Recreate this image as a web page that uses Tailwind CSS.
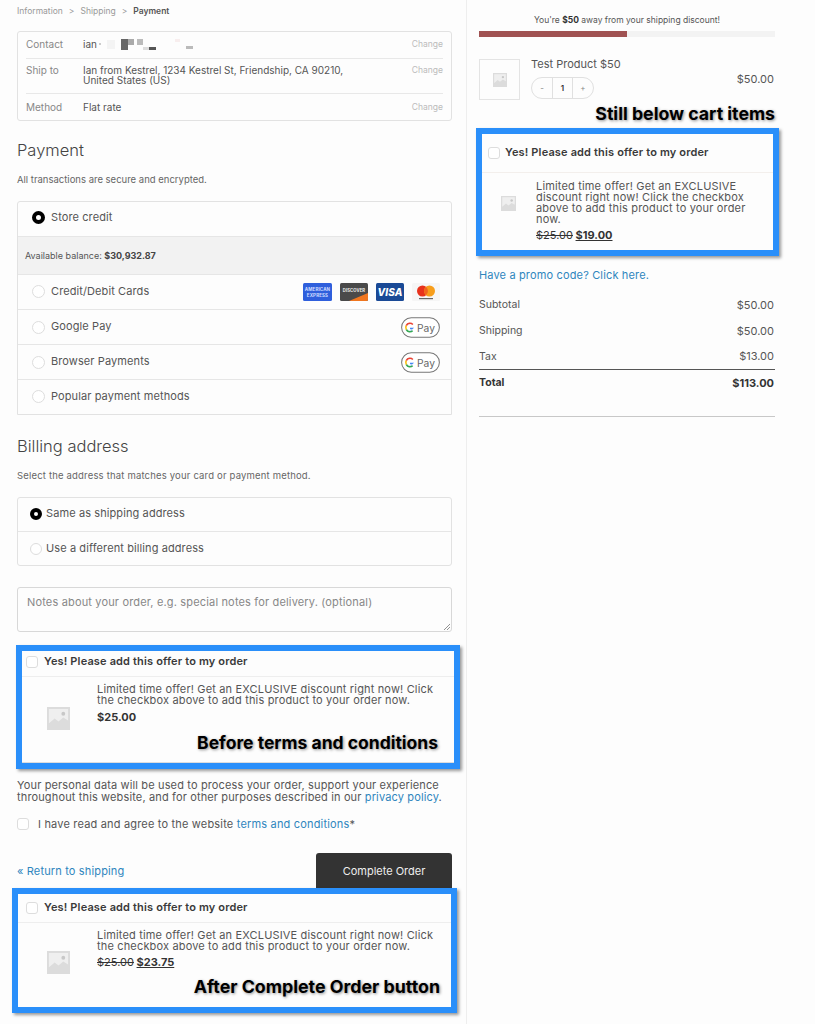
<!DOCTYPE html>
<html lang="en">
  <head>
    <meta charset="UTF-8" />
    <meta name="viewport" content="width=device-width, initial-scale=1.0" />
    <title>Checkout payment</title>
    <script src="https://cdn.jsdelivr.net/npm/@tailwindcss/browser@4"></script>
  </head>
  <body class="bg-[#fdfdfd] font-[Inter,sans-serif] text-[#555]">
    <svg class="hidden">
      <symbol id="ph" viewBox="0 0 24 24">
        <rect width="24" height="24" fill="#dcdcdc" />
        <path d="M2 2h20v12l-5-3-5 4-4-3-6 5z" fill="#efefef" />
        <circle cx="17" cy="7" r="2" fill="#c8c8c8" />
      </symbol>
      <symbol id="gpay" viewBox="0 0 38 20">
        <rect x=".6" y=".6" width="36.8" height="18.8" rx="9.4" fill="#fff" stroke="#777" />
        <path d="M12.8 10.2h-4v1.5h2.3a2.4 2.4 0 0 1-2.3 1.6z" fill="#4285f4" />
        <path d="M8.8 13.3a3.3 3.3 0 0 1-3-1.9l-1.3 1a4.8 4.8 0 0 0 7.4 1.200l-1-1a3 3 0 0 1-2.100.7z" fill="#34a853" />
        <path d="M5.800 11.400a3.300 3.300 0 0 1 0-2.800l-1.300-1a4.800 4.800 0 0 0 0 4.800z" fill="#fbbc05" />
        <path d="M8.800 6.700c.9 0 1.600.3 2.200.9l1.100-1.100a4.800 4.800 0 0 0-7.600 1.100l1.300 1a3.300 3.300 0 0 1 3-1.900z" fill="#ea4335" />
        <text x="15.500" y="14" font-size="10" fill="#666" font-family="Inter">Pay</text>
      </symbol>
    </svg>

    <div class="flex h-[1024px] w-[815px] overflow-hidden">
      <!-- left column -->
      <div class="h-full w-[467px] shrink-0 border-r border-[#eeeeee] pl-[17px] pr-[14px]">
        <div class="flex h-[22px] items-center gap-[6px] text-[8.500px] text-[#999]">
          <span>Information</span>
          <span>&gt;</span>
          <span>Shipping</span>
          <span>&gt;</span>
          <span class="font-semibold text-[#555]">Payment</span>
        </div>

        <!-- summary -->
        <div class="mt-[9px] h-[90px] rounded-[3px] border border-[#e2e2e2] px-[8px] text-[10px] leading-[10px]">
          <div class="flex h-[27px] items-center border-b border-[#e8e8e8] pb-[2px]">
            <span class="w-[57px] text-[#888]">Contact</span>
            <span>ian</span>
            <div class="ml-[2px] flex h-[10px] items-center">
              <i class="mr-[6px] h-[2px] w-[2px] bg-[#ccc]"></i>
              <i class="h-[9px] w-[8px] bg-[#f4f4f4]"></i>
              <i class="ml-[6px] h-[11px] w-[7px] bg-[#666]"></i>
              <i class="h-[6px] w-[6px] -translate-y-[2px] bg-[#aaa]"></i>
              <i class="ml-[3px] h-[6px] w-[6px] -translate-y-[2px] bg-[#bbb]"></i>
              <i class="h-[3px] w-[6px] translate-y-[4px] bg-[#ddd]"></i>
              <i class="h-[3px] w-[7px] translate-y-[4px] bg-[#555]"></i>
              <i class="ml-[19px] h-[3px] w-[5px] -translate-y-[4px] bg-[#f8eeee]"></i>
              <i class="ml-[6px] h-[3px] w-[7px] translate-y-[3px] bg-[#bbb]"></i>
            </div>
            <span class="ml-auto text-[8.500px] text-[#bbb]">Change</span>
          </div>
          <div class="flex h-[35px] items-start border-b border-[#e8e8e8] pt-[6px]">
            <span class="w-[57px] text-[#888]">Ship to</span>
            <span class="w-[270px]">Ian from Kestrel, 1234 Kestrel St, Friendship, CA 90210, United States (US)</span>
            <span class="ml-auto text-[8.500px] text-[#bbb]">Change</span>
          </div>
          <div class="flex h-[26px] items-center">
            <span class="w-[57px] text-[#888]">Method</span>
            <span>Flat rate</span>
            <span class="ml-auto text-[8.500px] text-[#bbb]">Change</span>
          </div>
        </div>

        <!-- payment -->
        <h2 class="mt-[19px] text-[16.500px] leading-[20px] font-light text-[#444]">Payment</h2>
        <p class="mt-[15px] text-[9.500px] leading-[10px] text-[#666]">All transactions are secure and encrypted.</p>

        <div class="mt-[16px] h-[214px] rounded-t-[3px] border border-[#e2e2e2] text-[11px] tracking-[.1px]">
          <div class="flex h-[34px] items-center pb-[3px] pl-[14px]">
            <span class="mr-[6px] h-[13px] w-[13px] rounded-full border-[4px] border-black bg-white"></span>
            <span>Store credit</span>
          </div>
          <div class="flex h-[39px] items-center border-y border-[#e6e6e6] bg-[#f2f2f2] pl-[7px] text-[9px] tracking-normal">
            Available balance:&nbsp;<b class="font-bold text-[#444]">$30,932.87</b>
          </div>
          <div class="flex h-[35px] items-center border-b border-[#e6e6e6] pb-[1px] pl-[14px] pr-[11px]">
            <span class="mr-[6px] h-[13px] w-[13px] rounded-full border border-[#ddd] bg-white"></span>
            <span>Credit/Debit Cards</span>
            <div class="ml-auto flex items-center gap-[8px]">
              <svg width="29" height="18" viewBox="0 0 29 18">
                <rect width="29" height="18" rx="1.500" fill="#2f5fdc" />
                <text x="14.500" y="8" text-anchor="middle" font-size="4.500" font-weight="700" fill="#cfdcff" font-family="Inter">AMERICAN</text>
                <text x="14.500" y="14" text-anchor="middle" font-size="4.500" font-weight="700" fill="#cfdcff" font-family="Inter">EXPRESS</text>
              </svg>
              <svg width="28" height="18" viewBox="0 0 28 18">
                <rect width="28" height="18" rx="1.500" fill="#4a4a4a" />
                <path d="M9 18 28 10v6.500a1.500 1.500 0 0 1-1.500 1.500z" fill="#f0761f" />
                <text x="14" y="9" text-anchor="middle" font-size="4.200" font-weight="700" fill="#eee" font-family="Inter">DISCOVER</text>
              </svg>
              <svg width="28" height="18" viewBox="0 0 28 18">
                <rect width="28" height="18" rx="1.500" fill="#1a4a96" />
                <text x="14" y="13" text-anchor="middle" font-size="10" font-weight="800" font-style="italic" fill="#fff" font-family="Inter">VISA</text>
              </svg>
              <svg width="28" height="18" viewBox="0 0 28 18">
                <rect width="28" height="18" rx="1.500" fill="#f6f6f6" />
                <circle cx="10.500" cy="8" r="5.500" fill="#e8321c" />
                <circle cx="17.500" cy="8" r="5.500" fill="#f79e1b" />
                <path d="M14 3.800a5.500 5.500 0 0 1 0 8.400 5.500 5.500 0 0 1 0-8.400z" fill="#f1641e" />
                <rect x="7" y="15" width="14" height="1.200" fill="#666" />
              </svg>
            </div>
          </div>
          <div class="flex h-[35px] items-center border-b border-[#e6e6e6] pl-[14px] pr-[11px]">
            <span class="mr-[6px] h-[13px] w-[13px] rounded-full border border-[#ddd] bg-white"></span>
            <span class="-translate-y-[1px]">Google Pay</span>
            <svg class="ml-auto" width="39" height="21"><use href="#gpay" /></svg>
          </div>
          <div class="flex h-[35px] items-center border-b border-[#e6e6e6] pl-[14px] pr-[11px]">
            <span class="mr-[6px] h-[13px] w-[13px] rounded-full border border-[#ddd] bg-white"></span>
            <span class="-translate-y-[1px]">Browser Payments</span>
            <svg class="ml-auto" width="39" height="21"><use href="#gpay" /></svg>
          </div>
          <div class="flex h-[34px] items-center pb-[2px] pl-[14px]">
            <span class="mr-[6px] h-[13px] w-[13px] rounded-full border border-[#ddd] bg-white"></span>
            <span>Popular payment methods</span>
          </div>
        </div>

        <!-- billing -->
        <h2 class="mt-[21px] text-[16.500px] leading-[20px] font-light text-[#444]">Billing address</h2>
        <p class="mt-[15px] text-[9.500px] leading-[10px] tracking-[.18px] text-[#666]">Select the address that matches your card or payment method.</p>

        <div class="mt-[16px] h-[69px] rounded-[3px] border border-[#e2e2e2] text-[11px] tracking-[.1px]">
          <div class="flex h-[34px] items-center border-b border-[#e6e6e6] pb-[2px] pl-[12px]">
            <span class="mr-[4px] h-[12px] w-[12px] rounded-full border-[4px] border-black bg-white"></span>
            <span>Same as shipping address</span>
          </div>
          <div class="flex h-[33px] items-center pl-[12px]">
            <span class="mr-[4px] h-[12px] w-[12px] rounded-full border border-[#ddd] bg-white"></span>
            <span>Use a different billing address</span>
          </div>
        </div>

        <div class="relative mt-[21px] h-[45px] rounded-[3px] border border-[#d8d8d8] px-[9px] pt-[8px] text-[11px] leading-[12px] tracking-[.16px] text-[#888]">
          Notes about your order, e.g. special notes for delivery. (optional)
          <svg class="absolute bottom-[1px] right-[1px]" width="7" height="7" viewBox="0 0 7 7"><path d="M1 7 7 1M4 7l3-3" stroke="#777" stroke-width=".8" /></svg>
        </div>

        <!-- offer before terms -->
        <div class="mt-[13px] -ml-[1px] h-[124px] w-[444px] border-[6px] border-[#2a8ffa] bg-[#fdfdfd] shadow-[2px_2px_3px_rgba(0,0,0,.4)]">
          <div class="flex h-[26px] items-center border-b border-[#eeeeee] pl-[4px] pb-[4px]">
            <span class="mr-[6px] h-[12px] w-[12px] rounded-[3px] border border-[#ddd] bg-white"></span>
            <span class="text-[11px] font-semibold tracking-[.15px] text-[#3a3a3a]">Yes! Please add this offer to my order</span>
          </div>
          <div class="flex h-[86px] border-b border-[#dddddd] pt-[7px]">
            <svg class="ml-[25px] mt-[23px] h-[23px] w-[23px] shrink-0"><use href="#ph" /></svg>
            <div class="ml-[27px] w-[341px]">
              <p class="text-[11px] leading-[11px] tracking-[.16px] text-[#555]">Limited time offer! Get an EXCLUSIVE discount right now! Click the checkbox above to add this product to your order now.</p>
              <p class="mt-[5px] text-[11px] leading-[12px] font-bold text-[#333]">$25.00</p>
              <p class="mt-[10px] text-right text-[17.500px] leading-[20px] font-bold text-black [text-shadow:1px_1px_3px_rgba(0,0,0,.45)]">Before terms and conditions</p>
            </div>
          </div>
        </div>

        <p class="mt-[10px] text-[11px] leading-[12px] tracking-[.14px] text-[#555]">Your personal data will be used to process your order, support your experience throughout this website, and for other purposes described in our <a class="text-[#2f86bd]">privacy policy</a>.</p>

        <div class="mt-[15px] flex h-[12px] items-center text-[11px] tracking-[.18px]">
          <span class="mr-[9px] h-[12px] w-[12px] rounded-[3px] border border-[#ddd] bg-white"></span>
          <span>I have read and agree to the website <a class="text-[#2f86bd]">terms and conditions</a>*</span>
        </div>

        <div class="mt-[23px] flex h-[35px] items-center justify-between text-[11px]">
          <a class="pt-[2px] tracking-[.15px] text-[#2f86bd]">« Return to shipping</a>
          <span class="flex h-[35px] w-[136px] items-center justify-center rounded-t-[3px] bg-[#333333] pt-[2px] text-[#eeeeee]">Complete Order</span>
        </div>

        <!-- offer after button -->
        <div class="relative -ml-[5px] h-[125px] w-[445px] border-[6px] border-[#2a8ffa] bg-[#fdfdfd] shadow-[2px_2px_3px_rgba(0,0,0,.4)]">
          <div class="flex h-[29px] items-center border-b border-[#eeeeee] pl-[8px] pb-[1px]">
            <span class="mr-[6px] h-[12px] w-[12px] rounded-[3px] border border-[#ddd] bg-white"></span>
            <span class="text-[11px] font-semibold tracking-[.15px] text-[#3a3a3a]">Yes! Please add this offer to my order</span>
          </div>
          <div class="flex pt-[7px]">
            <svg class="ml-[29px] mt-[21px] h-[23px] w-[23px] shrink-0"><use href="#ph" /></svg>
            <div class="ml-[27px] w-[343px]">
              <p class="text-[11px] leading-[11px] tracking-[.16px] text-[#555]">Limited time offer! Get an EXCLUSIVE discount right now! Click the checkbox above to add this product to your order now.</p>
              <p class="mt-[4px] text-[11px] leading-[12px] font-bold text-[#333]"><s class="font-normal">$25.00</s> <span class="underline">$23.75</span></p>
              <p class="mt-[9px] text-right text-[17.800px] leading-[20px] font-bold text-black [text-shadow:1px_1px_3px_rgba(0,0,0,.45)]">After Complete Order button</p>
            </div>
          </div>
        </div>
      </div>

      <!-- right column -->
      <div class="w-[348px] pl-[12px]">
        <div class="w-[296px]">
          <p class="mt-[15px] text-center text-[8.500px] leading-[10px] text-[#555]">You're <b class="text-[#333]">$50</b> away from your shipping discount!</p>
          <div class="mt-[6px] h-[6px] bg-[#f3f3f3]">
            <div class="h-full bg-[#a05252]" style="width: 50%"></div>
          </div>

          <div class="mt-[22px] flex h-[41px] items-start">
            <div class="flex h-[41px] w-[41px] items-center justify-center border border-[#e4e4e4]">
              <svg class="h-[14px] w-[14px]"><use href="#ph" /></svg>
            </div>
            <div class="ml-[11px]">
              <p class="text-[11px] leading-[11px]">Test Product $50</p>
              <div class="mt-[7px] flex h-[22px] w-[63px] items-center rounded-full border border-[#e0e0e0] text-[8px]">
                <span class="w-[20px] text-center text-[#888]">-</span>
                <span class="w-[21px] border-x border-[#e0e0e0] text-center leading-[20px] font-semibold text-[#333]">1</span>
                <span class="w-[20px] text-center text-[#888]">+</span>
              </div>
            </div>
            <span class="ml-auto mr-[1px] mt-[14px] text-[11px] leading-[12px]">$50.00</span>
          </div>

          <p class="mt-[4px] text-right text-[17.700px] leading-[20px] font-bold text-black [text-shadow:1px_1px_3px_rgba(0,0,0,.45)]">Still below cart items</p>
        </div>

        <!-- offer below cart -->
        <div class="mt-[4px] -ml-[3px] h-[128px] w-[303px] border-[6px] border-[#2a8ffa] bg-[#fdfdfd] shadow-[2px_2px_3px_rgba(0,0,0,.4)]">
          <div class="flex h-[39px] items-center border-b border-[#f3efec] pl-[6px] pb-[1px]">
            <span class="mr-[5px] h-[12px] w-[12px] rounded-[3px] border border-[#ddd] bg-white"></span>
            <span class="text-[11px] font-semibold tracking-[.15px] text-[#3a3a3a]">Yes! Please add this offer to my order</span>
          </div>
          <div class="flex pt-[8px]">
            <svg class="ml-[19px] mt-[15px] h-[15px] w-[15px] shrink-0"><use href="#ph" /></svg>
            <div class="ml-[20px] w-[225px]">
              <p class="text-[11px] leading-[11px] tracking-[.16px] text-[#555]">Limited time offer! Get an EXCLUSIVE discount right now! Click the checkbox above to add this product to your order now.</p>
              <p class="mt-[4px] text-[11px] leading-[12px] font-bold text-[#333]"><s class="font-normal">$25.00</s> <span class="underline">$19.00</span></p>
            </div>
          </div>
        </div>

        <div class="w-[296px] text-[10.500px]">
          <a class="mt-[13px] block text-[11px] leading-[12px] tracking-[.15px] text-[#2f86bd]">Have a promo code? Click here.</a>
          <div class="mt-[11px] flex h-[26px] items-center justify-between pr-[1px]"><span>Subtotal</span><span class="text-[11px]">$50.00</span></div>
          <div class="flex h-[26px] items-center justify-between pr-[1px]"><span>Shipping</span><span class="text-[11px]">$50.00</span></div>
          <div class="flex h-[26px] items-center justify-between border-b border-[#555] pr-[1px]"><span>Tax</span><span class="text-[11px]">$13.00</span></div>
          <div class="flex h-[26px] items-center justify-between pr-[1px] font-bold text-[#333]"><span>Total</span><span class="text-[11px]">$113.00</span></div>
          <div class="mt-[20px] border-t border-[#c8c8c8]"></div>
        </div>
      </div>
    </div>
  </body>
</html>
